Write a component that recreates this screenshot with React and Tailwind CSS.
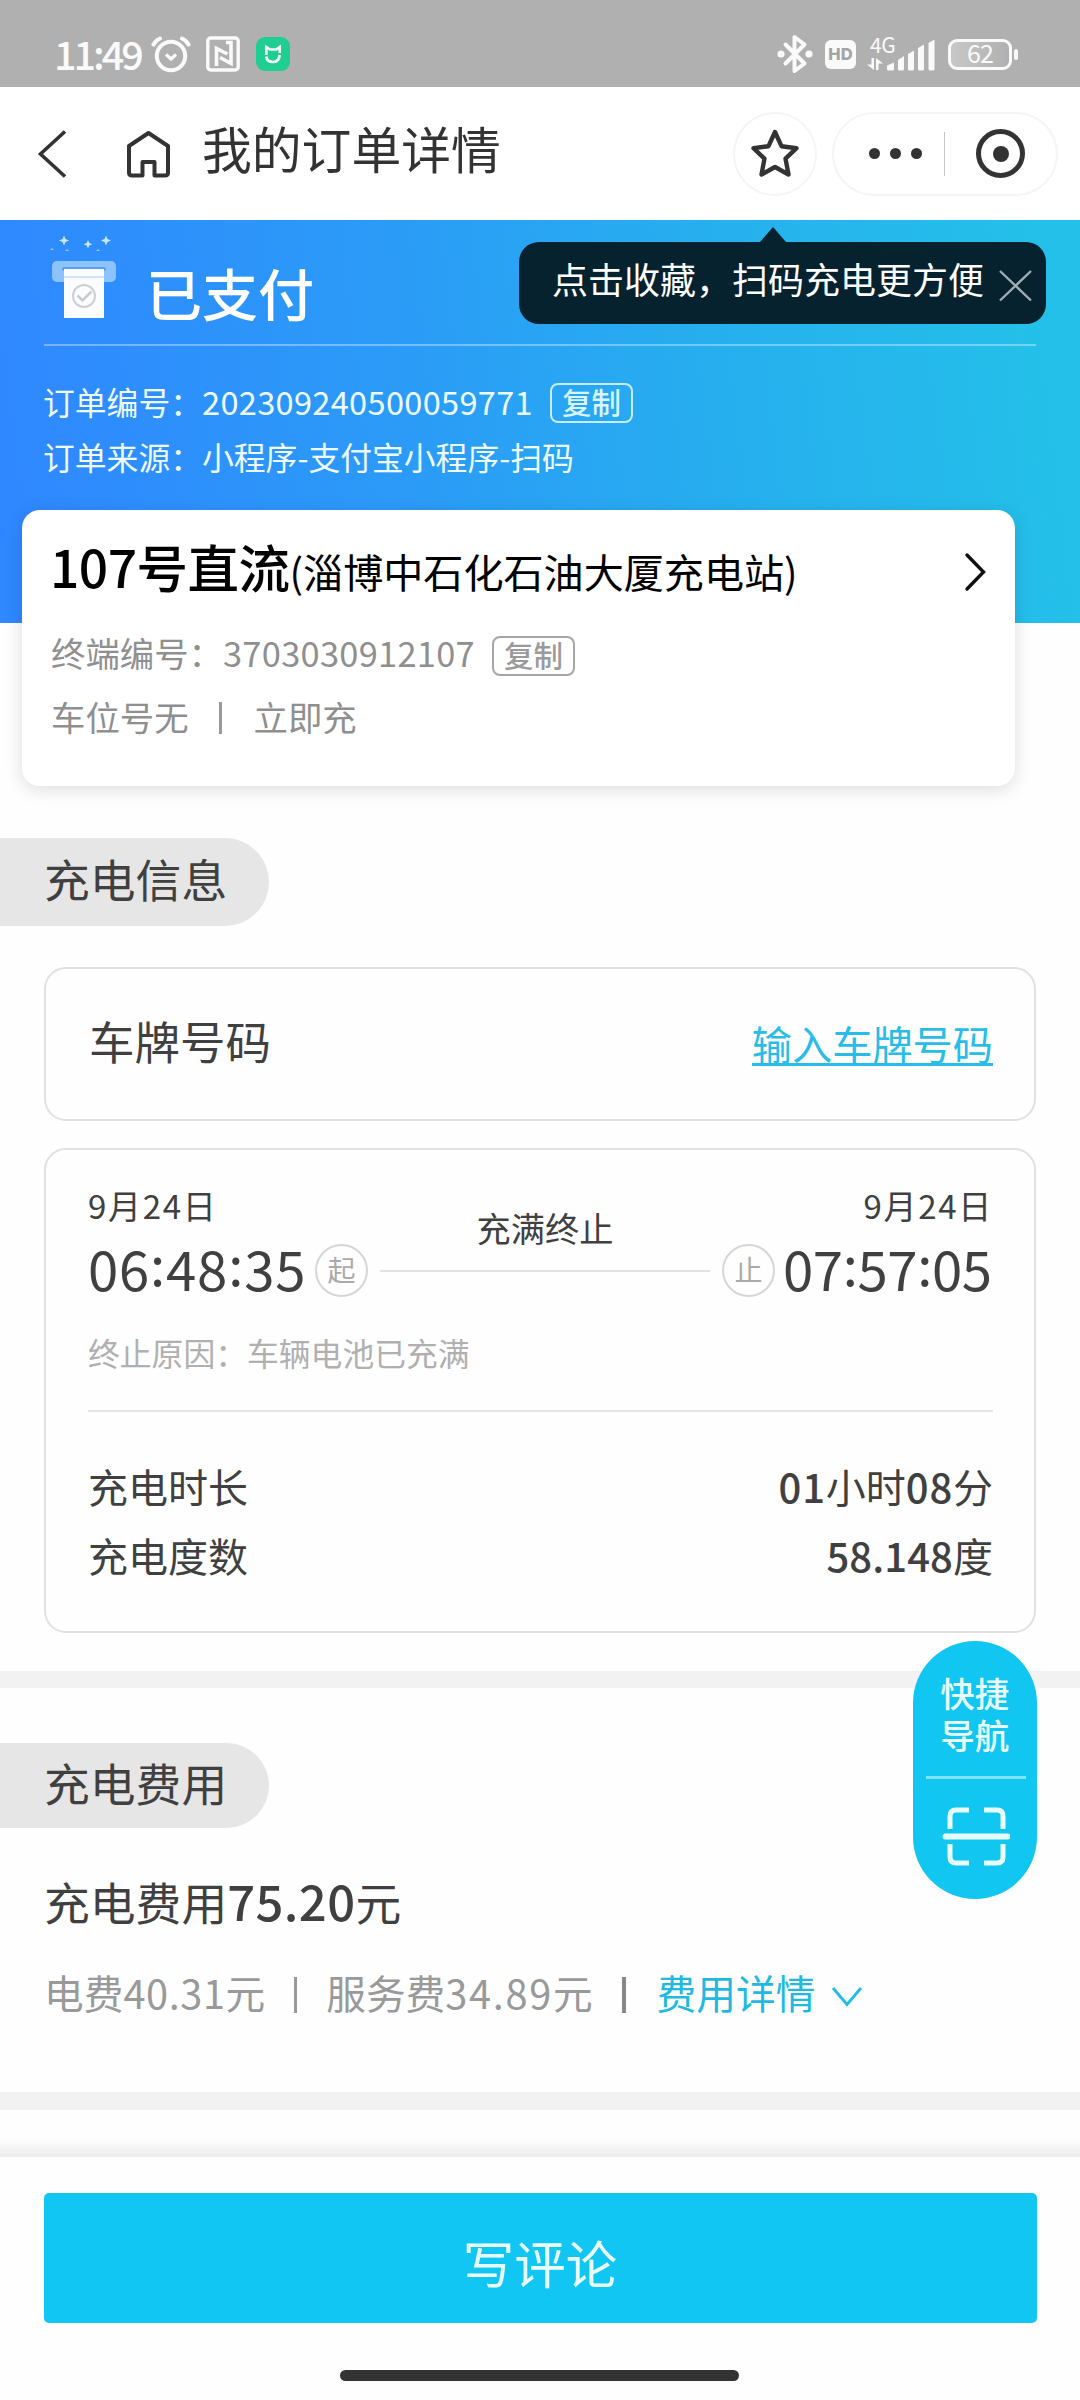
import React from "react";

function StatusBar() {
  return (
    <div className="flex h-[87px] items-center bg-[#b0b0b0] pt-[21px] text-[#fafafa]">
      <div className="mt-[-3px] ml-[54px] w-[97px] whitespace-nowrap text-[39.5px] leading-[40px] font-medium tracking-[-3px]">
        11:49
      </div>
      <svg className="w-[40px] h-[38px]" viewBox="0 0 40 38" fill="none" stroke="currentColor" strokeLinecap="round">
        <circle cx="20" cy="21" r="14.2" strokeWidth="4" />
        <path d="M15 19.5l5 4.5 5-4.5" strokeWidth="3.4" strokeLinecap="butt" />
        <path d="M2.5 9.5Q4.5 5.5 9 3.5M37.500 9.500Q35.500 5.500 31 3.500" strokeWidth="4" />
      </svg>
      <svg className="ml-[15px] w-[34px] h-[36px]" viewBox="0 0 34 36" fill="none" stroke="currentColor">
        <rect x="1.8" y="2" width="30.400" height="32" rx="3" strokeWidth="3.4" />
        <path d="M10.500 30V12.500l11 5.500" strokeWidth="3.600" />
        <path d="M14 21.500l11 6V6.500H20" strokeWidth="3.600" />
      </svg>
      <div className="ml-[16px] flex h-[34px] w-[34px] items-center justify-center rounded-[9px] bg-[#1fce90]">
        <svg className="w-[18px] h-[20px]" viewBox="0 0 18 20" fill="none" stroke="#f5fffb" strokeWidth="2.7">
          <path d="M2.300 11V3l3.700 2.500h6L15.700 3v6M2.300 12.500Q3 18 9 18T15.700 11" />
        </svg>
      </div>
      <div className="flex-1" />
      <svg className="w-[36px] h-[40px]" viewBox="0 0 36 40" fill="none" stroke="currentColor" strokeWidth="4" strokeLinejoin="round" strokeLinecap="round">
        <path d="M8.500 10.500L27.500 29.500 17.500 37V3l10 7.500L8.500 29.500" />
        <circle cx="4" cy="20" r="3.600" fill="currentColor" stroke="none" />
        <circle cx="32" cy="20" r="3.600" fill="currentColor" stroke="none" />
      </svg>
      <div className="ml-[12px] flex h-[29px] w-[31px] items-center justify-center rounded-[6px] bg-[#fafafa] font-['Inter',sans-serif] text-[16.5px] leading-none font-extrabold text-[#a4a4a4]">
        HD
      </div>
      <div className="ml-[11px] flex h-[36px] w-[70px] items-end">
        <div className="flex h-[36px] w-[20px] flex-col justify-between">
          <div className="mt-[-2px] ml-[3px] whitespace-nowrap text-[21px] leading-[20px] tracking-[-0.5px]">4G</div>
          <svg className="mb-[2px] w-[16px] h-[12px]" viewBox="0 0 16 12" fill="currentColor">
            <path d="M4.500 0H7v12L0 6.500h4.500zM9 12h2.500V5.500H16L9 0z" />
          </svg>
        </div>
        <svg className="mb-[1px] w-[49px] h-[32px]" viewBox="0 0 49 32" fill="currentColor">
          <path d="M0 26.500l7-3V30q0 1.500-1.500 1.500h-4Q0 31.500 0 30zM11 21l6-4v13q0 1.500-1.500 1.500h-3Q11 31.500 11 30zM21 15l6-3.500V30q0 1.500-1.500 1.500h-3Q21 31.500 21 30zM31 9l6-3.500V30q0 1.500-1.500 1.500h-3Q31 31.500 31 30zM41.500 4l6-3.500V30q0 1.500-1.500 1.500h-3q-1.500 0-1.500-1.500z" />
        </svg>
      </div>
      <div className="ml-[11px] flex h-[31px] w-[64px] items-center justify-center rounded-[9px] border-[3px] border-[#fafafa] bg-gradient-to-r from-[#c8c8c8] to-[#b0b0b0] pb-[3px] text-[25px] leading-none tracking-[-0.8px]">
        62
      </div>
      <div className="mr-[62px] ml-[2px] h-[11px] w-[4px] rounded-[2px] bg-[#fafafa]" />
    </div>
  );
}

function NavBar() {
  return (
    <div className="flex h-[133px] items-center bg-white text-[#333333]">
      <svg className="ml-[36px] w-[32px] h-[50px]" viewBox="0 0 32 50" fill="none" stroke="currentColor" strokeWidth="3.600">
        <path d="M29 2.500L4.500 25 29 47.500" />
      </svg>
      <svg className="ml-[56px] w-[48px] h-[50px]" viewBox="0 0 48 50" fill="none" stroke="currentColor" strokeWidth="4" strokeLinejoin="round">
        <path d="M18.500 46.500H8q-3 0-3-3V17L24.500 4 44 17v26.500q0 3-3 3H30.500V33h-12z" />
      </svg>
      <h1 className="mt-[-12px] ml-[30px] flex-1 text-[49.8px] leading-none font-normal whitespace-nowrap">我的订单详情</h1>
      <div className="flex h-[84px] w-[84px] items-center justify-center rounded-full border-2 border-[#f5f5f5]">
        <svg className="mt-[-1px] w-[48px] h-[50px]" viewBox="0 0 48 50" fill="none" stroke="currentColor" strokeWidth="4.400" strokeLinejoin="round">
          <path d="M24 4l6.500 14.200 15 2-11 10.500 3 15.800L24 39l-13.500 7.500 3-15.800-11-10.500 15-2z" />
        </svg>
      </div>
      <div className="mr-[22px] ml-[15px] flex h-[84px] w-[226px] items-center rounded-full border-2 border-[#f5f5f5]">
        <div className="ml-[35px] flex w-[75px] gap-[10px]">
          <i className="h-[11px] w-[11px] rounded-full bg-[#333333]" />
          <i className="h-[11px] w-[11px] rounded-full bg-[#333333]" />
          <i className="h-[11px] w-[11px] rounded-full bg-[#333333]" />
        </div>
        <div className="h-[44px] w-px bg-[#c4c4c4]" />
        <div className="ml-[31px] flex h-[49px] w-[49px] items-center justify-center rounded-full border-[5px] border-[#333333]">
          <div className="h-[16px] w-[16px] rounded-full bg-[#333333]" />
        </div>
      </div>
    </div>
  );
}

function ReceiptIcon() {
  return (
    <svg className="w-[72px] h-[90px]" viewBox="48 232 72 90" fill="none">
      <path d="M64 235.500l1.500 3.500 3.500 1.500-3.500 1.500-1.500 3.500-1.500-3.500-3.500-1.500 3.500-1.500zM88 240l1.300 3 3 1.300-3 1.300-1.300 3-1.300-3-3-1.300 3-1.300zM106 235.500l1.500 3.500 3.500 1.500-3.500 1.500-1.500 3.500-1.500-3.500-3.500-1.500 3.500-1.500z" fill="#c9e5ff" />
      <path d="M50 250l2-2 2 2zM65 251l2-2 2 2zM96 251l2-2 2 2z" fill="#8fc4ff" />
      <rect x="52" y="261" width="64" height="21" rx="5" fill="#8cc3fd" />
      <rect x="62" y="267" width="44" height="4" rx="2" fill="#5a9fee" />
      <path d="M64 269h40v49H64z" fill="#fbfcff" />
      <path d="M64 277h40" stroke="#c5dcf7" strokeWidth="1.500" />
      <circle cx="84" cy="296" r="11" stroke="#cfcfcf" strokeWidth="2" />
      <path d="M77.500 295.500l5 5 9-9" stroke="#cbcbcb" strokeWidth="2.500" />
    </svg>
  );
}

function Hero() {
  return (
    <section className="relative h-[403px] bg-[linear-gradient(83deg,#2f88ff_3%,#2b9bf7_38%,#26b0ee_68%,#24c0e9_96%)] px-[44px] text-white">
      <div className="flex h-[126px] border-b-2 border-white/35">
        <div className="mt-[12px] ml-[4px]">
          <ReceiptIcon />
        </div>
        <div className="mt-[40px] ml-[26px] text-[56px] leading-[64px] font-medium">已支付</div>
      </div>
      <div className="mt-[33px] flex h-[48px] items-center text-[31.8px] leading-none text-[#effcff]">
        <span className="ml-[-1px] pb-[3px]">订单编号：</span>
        <span className="w-[348px] pb-[3px] text-[32.5px] tracking-[0.35px]">202309240500059771</span>
        <Copy tone="light" />
      </div>
      <div className="mt-[7px] ml-[-1px] flex h-[48px] items-center pb-[3px] text-[31.8px] leading-none text-[#effcff]">
        <span>订单来源：小程序-支付宝小程序-扫码</span>
      </div>
      <div className="absolute top-[22px] right-[34px] flex h-[82px] w-[527px] rounded-[20px] bg-[#06222f]">
        <div className="absolute top-[-15px] left-[241px] border-x-[13px] border-b-[15px] border-x-transparent border-b-[#06222f]" />
        <span className="mt-[18px] ml-[33px] text-[36px] leading-[36px] whitespace-nowrap">点击收藏，扫码充电更方便</span>
        <svg className="mt-[27px] ml-[15px] w-[33px] h-[33px] shrink-0" viewBox="0 0 33 33" stroke="#9fadb3" strokeWidth="2.400">
          <path d="M1 2l31 29.500M32 2L1 31.500" />
        </svg>
      </div>
    </section>
  );
}

function Copy({ tone }) {
  const look = tone === "light" ? "border-[#c8ecff] text-[#d8f4ff]" : "border-[#a6a6a6] text-[#9a9a9a]";
  return (
    <button className={`flex h-[40px] w-[83px] items-center justify-center rounded-[8px] border-2 pb-[3px] text-[29.5px] leading-none font-medium ${look}`}>
      复制
    </button>
  );
}

function StationCard() {
  return (
    <section className="relative mt-[-113px] ml-[22px] h-[276px] w-[993px] rounded-[18px] bg-white px-[29px] pt-[24px] shadow-[0_4px_18px_rgba(0,0,0,0.13)]">
      <div className="flex h-[70px] items-center justify-between">
        <div className="mt-[-6px] ml-[-1px] flex items-baseline whitespace-nowrap text-black">
          <span className="text-[51.5px] leading-[70px] font-medium tracking-[-0.5px]">107号直流</span>
          <span className="text-[40.1px]">(淄博中石化石油大厦充电站)</span>
        </div>
        <svg className="mt-[6px] w-[22px] h-[40px]" viewBox="0 0 22 40" fill="none" stroke="#111" strokeWidth="3.400" strokeLinecap="round">
          <path d="M3 3l16.500 17L3 37" />
        </svg>
      </div>
      <div className="mt-[28px] flex h-[48px] items-center text-[34.4px] leading-none text-[#8f8f8f]">
        <span className="pb-[7px]">终端编号：</span>
        <span className="w-[269px] pb-[7px] tracking-[0.3px]">3703030912107</span>
        <Copy />
      </div>
      <div className="mt-[14px] flex h-[48px] items-center text-[34.4px] leading-none text-[#8f8f8f]">
        <span className="pb-[4px]">车位号无</span>
        <i className="mr-[32px] ml-[30px] h-[32px] w-[3px] bg-[#999999]" />
        <span className="pb-[4px]">立即充</span>
      </div>
    </section>
  );
}

function SectionTag({ children }) {
  return (
    <h2 className="flex h-full w-[269px] items-center rounded-r-full bg-[#e6e6e6] pb-[6px] pl-[44px] text-[45.8px] leading-none font-normal text-[#404040]">
      {children}
    </h2>
  );
}

function Mark({ children }) {
  return (
    <span className="mt-[-2px] flex h-[53px] w-[53px] items-center justify-center rounded-full border-2 border-[#d6d6d6] pb-[3px] text-[28px] leading-none text-[#aaaaaa]">
      {children}
    </span>
  );
}

function Clock({ parts, spacing }) {
  return (
    <span className={`-mt-[6px] flex text-[54.5px] leading-[60px] ${spacing}`}>
      {parts.map((p, i) => (
        <React.Fragment key={i}>
          {i > 0 && <span className="-translate-y-[5px]">:</span>}
          <span>{p}</span>
        </React.Fragment>
      ))}
    </span>
  );
}

function ChargeInfo() {
  return (
    <section className="text-[#404040]">
      <div className="mt-[52px] h-[88px]">
        <SectionTag>充电信息</SectionTag>
      </div>
      <div className="mx-[44px] mt-[41px] flex h-[154px] items-center justify-between rounded-[22px] border-[2.5px] border-[#e1e1e1] pr-[41px] pb-[6px] pl-[43px]">
        <span className="text-[45.5px] leading-none">车牌号码</span>
        <a className="mt-[8px] border-b-[3px] border-[#27bde8] pb-[1px] text-[40.2px] leading-[38px] text-[#27bde8]">输入车牌号码</a>
      </div>
      <div className="mx-[44px] mt-[27px] h-[485px] rounded-[22px] border-[2.5px] border-[#e1e1e1] pr-[41px] pl-[42px]">
        <div className="mt-[34px] flex h-[42px] items-center justify-between text-[33px] leading-none tracking-[1.7px]">
          <span>9月24日</span>
          <span>9月24日</span>
        </div>
        <div className="mt-[15px] flex h-[60px] items-center">
          <div className="w-[227px]">
            <Clock parts={["06", "48", "35"]} spacing="tracking-[0.8px]" />
          </div>
          <Mark>起</Mark>
          <div className="mx-[12px] flex h-[60px] flex-1 flex-col items-center">
            <span className="-mt-[31px] h-[60px] text-[34.2px] leading-[34px]">充满终止</span>
            <i className="h-[2px] w-full shrink-0 bg-[#e2e2e2]" />
          </div>
          <Mark>止</Mark>
          <div className="ml-[8px] w-[210px]">
            <Clock parts={["07", "57", "05"]} spacing="tracking-[-0.4px]" />
          </div>
        </div>
        <div className="mt-[19px] text-[31.8px] leading-[64px] text-[#b0b0b0]">终止原因：车辆电池已充满</div>
        <div className="mt-[26px] h-[2px] bg-[#e4e4e4]" />
        <dl className="mt-[40px] text-[40px] leading-[69px]">
          <div className="flex justify-between">
            <dt>充电时长</dt>
            <dd>
              <span className="font-medium tracking-[0.8px]">01</span>小时<span className="font-medium tracking-[0.8px]">08</span>分
            </dd>
          </div>
          <div className="flex justify-between">
            <dt>充电度数</dt>
            <dd>
              <span className="font-medium tracking-[0.1px]">58.148</span>度
            </dd>
          </div>
        </dl>
      </div>
    </section>
  );
}

function QuickNav() {
  return (
    <aside className="absolute top-[1641px] left-[913px] flex h-[258px] w-[123.5px] flex-col items-center rounded-full bg-[#12c6f2] text-[#e8fdff]">
      <div className="mt-[30px] text-center text-[34.5px] leading-[42px] font-medium">
        快捷
        <br />
        导航
      </div>
      <div className="mt-[21px] ml-[2px] h-[3px] w-[100px] bg-[#7fe3fa]" />
      <svg className="mt-[27px] ml-[2px] w-[68px] h-[62px]" viewBox="0 0 68 62" fill="none" stroke="currentColor" strokeWidth="5" strokeLinecap="butt">
        <path d="M8 23V10q0-6 6-6h13M42 4h13q6 0 6 6v13M8 38v13q0 6 6 6h13M42 57h13q6 0 6-6V38" />
        <path d="M3.500 30.500h62" strokeWidth="6" strokeLinecap="round" />
      </svg>
    </aside>
  );
}

function ChargeFee() {
  return (
    <section className="h-[404px] text-[#404040]">
      <div className="h-[55px]" />
      <div className="h-[85px]">
        <SectionTag>充电费用</SectionTag>
      </div>
      <div className="mt-[37px] ml-[44px] flex items-baseline text-[45.8px] leading-[70px]">
        <span>充电费用</span>
        <span className="text-[49px] leading-[70px] font-medium tracking-[0.4px]">75.20</span>
        <span>元</span>
      </div>
      <div className="mt-[32px] ml-[44px] flex h-[54px] items-center text-[39.7px] leading-none text-[#999999]">
        <span className="pb-[6px]">
          电费<span className="tracking-[0.6px]">40.31</span>元
        </span>
        <i className="mr-[29px] ml-[29px] h-[36px] w-[3px] bg-[#999999]" />
        <span className="pb-[6px]">
          服务费<span className="tracking-[1.7px]">34.89</span>元
        </span>
        <i className="mr-[31px] ml-[29px] h-[36px] w-[4px] bg-[#888888]" />
        <span className="pb-[6px] text-[#1fb9e2]">费用详情</span>
        <svg className="mt-[3px] ml-[16px] w-[32px] h-[22px]" viewBox="0 0 32 22" fill="none" stroke="#1fbde8" strokeWidth="2.800">
          <path d="M2 2l14 16.500L30 2" />
        </svg>
      </div>
    </section>
  );
}

export default function App() {
  return (
    <main className="relative flex h-[2400px] w-[1080px] flex-col overflow-hidden bg-[#fefefe] font-['Noto_Sans_CJK_SC',sans-serif]">
      <StatusBar />
      <NavBar />
      <Hero />
      <StationCard />
      <ChargeInfo />
      <div className="mt-[38px] h-[17px] shrink-0 bg-[#f2f2f2]" />
      <ChargeFee />
      <div className="h-[18px] shrink-0 bg-[#f2f2f2]" />
      <div className="h-[47px] shrink-0 bg-gradient-to-b from-[#fefefe] from-60% to-[#ececec]" />
      <footer className="flex flex-1 flex-col items-center bg-[#fefefe]">
        <button className="mt-[36px] flex h-[130px] w-[993px] items-center justify-center rounded-[5px] bg-[#12c6f4] pt-[7px] text-[51.5px] leading-none text-[#e9fdff]">
          写评论
        </button>
        <div className="mt-[47px] mr-[2px] h-[11px] w-[399px] rounded-full bg-[#333333]" />
      </footer>
      <QuickNav />
    </main>
  );
}
